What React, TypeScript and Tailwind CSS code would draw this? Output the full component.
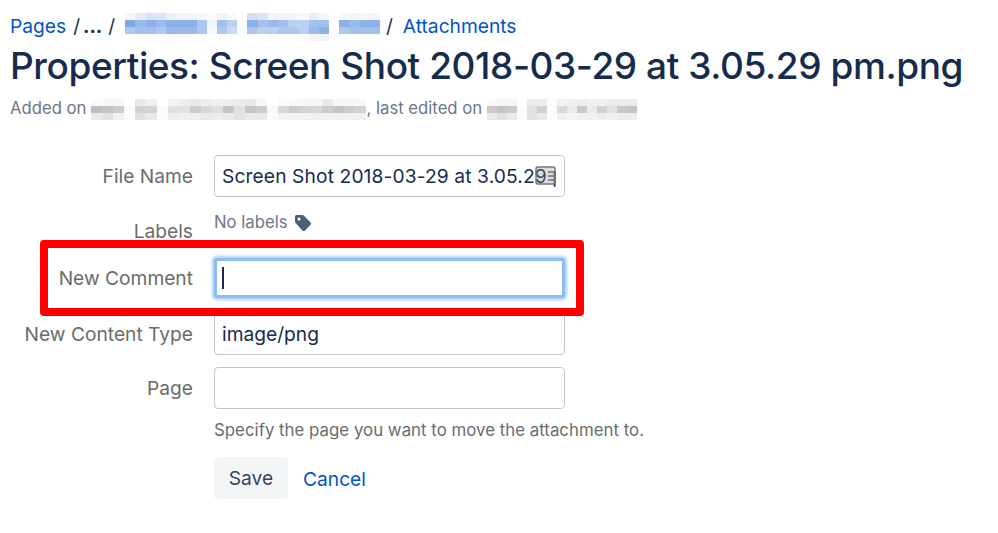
const FONT = "font-['Inter','Noto_Sans',sans-serif]"

// blurred-out bits of the screenshot, one string per row of mosaic cells
function Mosaic({ rows, color, cell = 10 }: { rows: number[][]; color: string; cell?: number }) {
  return (
    <span className="inline-flex flex-col align-middle blur-[0.7px]">
      {rows.map((row, r) => (
        <span key={r} className="flex">
          {row.map((v, c) => (
            <span
              key={c}
              className="block h-[7px] shrink-0"
              style={{ width: cell, backgroundColor: color, opacity: v }}
            />
          ))}
        </span>
      ))}
    </span>
  )
}

const pageTitleBlur = [
  [0.05, 0.1, 0.15, 0.15, 0.08, 0.05, 0.05, 0.04, 0.02, 0.06, 0.03, 0, 0.18, 0.15, 0.05, 0.06, 0.05, 0.04, 0.1, 0.04, 0, 0.03, 0.05, 0.04, 0.06],
  [0.5, 0.4, 0.45, 0.4, 0.45, 0.45, 0.45, 0.32, 0.06, 0.36, 0.27, 0.02, 0.45, 0.36, 0.4, 0.36, 0.27, 0.27, 0.36, 0.36, 0, 0.45, 0.4, 0.45, 0.45],
  [0.32, 0.36, 0.36, 0.32, 0.4, 0.4, 0.4, 0.32, 0.04, 0.32, 0.22, 0.02, 0.32, 0.27, 0.27, 0.32, 0.32, 0.27, 0.4, 0.45, 0, 0.32, 0.36, 0.36, 0.36],
  [0, 0.02, 0.02, 0.02, 0.02, 0, 0, 0.02, 0, 0, 0, 0, 0, 0, 0.02, 0, 0, 0.02, 0.06, 0.06, 0, 0, 0, 0, 0],
]

const addedBlur = [
  [0.03, 0.05, 0.05, 0, 0.15, 0.1, 0, 0.08, 0.12, 0.15, 0.12, 0.1, 0.12, 0.14, 0.15, 0.06, 0, 0.03, 0.04, 0.05, 0.05, 0.15, 0.06, 0.05, 0.05],
  [0.45, 0.4, 0.35, 0.03, 0.3, 0.3, 0.03, 0.2, 0.2, 0.35, 0.27, 0.22, 0.4, 0.2, 0.4, 0.35, 0.05, 0.27, 0.35, 0.3, 0.27, 0.35, 0.4, 0.35, 0.3],
  [0.15, 0.2, 0.1, 0.02, 0.2, 0.15, 0.02, 0.12, 0.1, 0.12, 0.15, 0.12, 0.15, 0.2, 0.15, 0.15, 0.03, 0.08, 0.08, 0.08, 0.1, 0.1, 0.1, 0.1, 0.1],
]

const editedBlur = [
  [0.04, 0.06, 0.06, 0, 0.14, 0.12, 0.02, 0.08, 0.1, 0.12, 0.1, 0.1, 0.14, 0.14, 0.14],
  [0.36, 0.4, 0.36, 0.02, 0.2, 0.32, 0.02, 0.25, 0.15, 0.36, 0.15, 0.32, 0.2, 0.36, 0.4],
  [0.15, 0.2, 0.15, 0.02, 0.2, 0.15, 0.02, 0.1, 0.08, 0.1, 0.1, 0.12, 0.1, 0.12, 0.12],
]

function Label({ children }: { children: React.ReactNode }) {
  return <div className="w-[193px] shrink-0 whitespace-nowrap text-right text-[#6b6b6b]">{children}</div>
}

function Input({ value, wide }: { value?: string; wide?: boolean }) {
  return (
    <div className={`flex h-[42px] w-[351px] items-center overflow-hidden whitespace-nowrap rounded-[4px] border border-[#c6c6c6] bg-white pl-[7px] text-[#172b4d] ${wide ? "tracking-[0.12px]" : ""}`}>
      {value}
    </div>
  )
}

export default function App() {
  return (
    <div className={`${FONT} relative h-[533px] w-[998px] overflow-hidden bg-white pl-[10px] pt-[15px] text-[19.2px]`}>
      <nav className="flex h-[22px] items-center text-[#42526e]">
        <a className="text-[#0052cc]">Pages</a>
        <span className="ml-[7px] text-[#172b4d]">/</span>
        <span className="ml-[3px] font-bold text-[#172b4d]">...</span>
        <span className="ml-[6px] text-[#172b4d]">/</span>
        <span className="ml-[10px]">
          <Mosaic rows={pageTitleBlur} color="#0052cc" cell={10.2} />
        </span>
        <span className="ml-[6px] text-[#172b4d]">/</span>
        <a className="ml-[10px] text-[#0052cc]">Attachments</a>
      </nav>

      <h1 className="mt-[6px] whitespace-nowrap text-[37px] font-medium leading-[46px] tracking-[-0.42px] text-[#172b4d]">
        Properties: Screen Shot 2018-03-29 at 3.05.29 pm.png
      </h1>

      <div className="mt-[9px] flex h-[22px] items-center text-[16.7px] text-[#6b778c]">
        <span>Added on</span>
        <span className="ml-[5px]">
          <Mosaic rows={addedBlur} color="#6b6b78" cell={11} />
        </span>
        <span>, last edited on</span>
        <span className="ml-[5px]">
          <Mosaic rows={editedBlur} color="#6b6b78" cell={10} />
        </span>
      </div>

      <form className="-ml-[10px] mt-[35px] flex flex-col">
        <div className="flex h-[42px] items-center gap-[21px]">
          <Label>File Name</Label>
          <div className="relative">
            <Input value="Screen Shot 2018-03-29 at 3.05.29 pm.png" wide />
            <div className="absolute inset-y-[1px] right-[1px] w-[8px] rounded-r-[4px] bg-white" />
            <div className="absolute right-[9px] top-[11px] h-[20px] w-[21px]">
              <svg viewBox="0 0 21 20" className="h-full w-full" fill="none">
                <rect x="1" y="1" width="19" height="17" rx="2" fill="#8a8a8a" fillOpacity="0.3" stroke="#777" strokeWidth="1.5" />
                <path d="M13 6h8M13 10h8M13 14h8" stroke="#6f6f6f" strokeWidth="1.4" />
              </svg>
            </div>
          </div>
        </div>

        <div className="flex h-[61px] gap-[21px]">
          <div className="mt-[20px]">
            <Label>Labels</Label>
          </div>
          <div className="mt-[15px] flex h-[22px] items-center gap-[6px] text-[16.7px] text-[#6b778c]">
            No labels
            <svg viewBox="0 0 20 20" className="h-[20px] w-[20px]" fill="#505f79">
              <path d="M2 3.5A1.5 1.5 0 0 1 3.5 2h6c.5 0 .9.2 1.2.5l6.7 6.8a2 2 0 0 1 0 2.8l-5.3 5.3a2 2 0 0 1-2.8 0L2.5 9.7A1.7 1.7 0 0 1 2 8.5z M6 4.6a1.5 1.5 0 1 0 0 3 1.5 1.5 0 0 0 0-3z" fillRule="evenodd" />
            </svg>
          </div>
        </div>

        <div className="flex h-[40px] items-center gap-[21px]">
          <Label>New Comment</Label>
          <div className="flex h-[40px] w-[351px] items-center rounded-[3px] border-[3px] border-[#8dbcf2] bg-white pl-[5px] shadow-[0_0_3px_2px_rgba(120,175,240,0.6)]">
            <div className="h-[22px] w-[2px] bg-[#172b4d]" />
          </div>
        </div>

        <div className="mt-[15px] flex h-[42px] items-center gap-[21px]">
          <Label>New Content Type</Label>
          <Input value="image/png" />
        </div>

        <div className="mt-[12px] flex h-[42px] items-center gap-[21px]">
          <Label>Page</Label>
          <Input />
        </div>

        <div className="ml-[214px] mt-[10px] whitespace-nowrap text-[16.85px] leading-[22px] text-[#6b6b6b]">
          Specify the page you want to move the attachment to.
        </div>

        <div className="ml-[214px] mt-[16px] flex items-center gap-[15px]">
          <button type="button" className="h-[42px] w-[74px] rounded-[4px] bg-[#f4f5f7] text-[#344563]">
            Save
          </button>
          <a className="mt-[2px] text-[#0052cc]">Cancel</a>
        </div>
      </form>

      <div className="pointer-events-none absolute left-[40px] top-[240px] h-[76px] w-[544px] rounded-[4px] border-[8px] border-[#ff0000]" />
    </div>
  )
}
